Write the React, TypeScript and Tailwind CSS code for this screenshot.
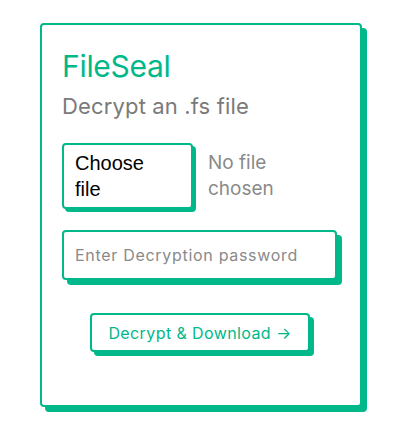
import React from "react";

export default function App() {
  return (
    <div className="min-h-[441px] w-[411px] bg-white pt-[23px] pl-[40px]" style={{ fontFamily: "Inter, 'Noto Sans', sans-serif" }}>
      <div className="w-[322px] h-[384px] rounded-[4px] border-2 border-[#00b88a] bg-white shadow-[5px_5px_0_#00b88a] px-[20px] pt-[23px]">
        <h1 className="text-[30px] leading-[36px] text-[#00b88a] font-normal tracking-[-0.3px]">FileSeal</h1>
        <p className="mt-[8px] text-[22px] leading-[28px] tracking-[0.15px] text-[#7a7a7a]">Decrypt an .fs file</p>
        <div className="mt-[23px] flex items-start">
          <div
            className="w-[131px] h-[66px] rounded-[4px] border-2 border-[#00b88a] shadow-[3px_3px_0_#00b88a] bg-white px-[11px] py-[5px] text-[20px] leading-[26px] text-black"
            style={{ fontFamily: "'Liberation Sans', Arial, sans-serif" }}
          >
            Choose
            <br />
            file
          </div>
          <div className="ml-[15px] pt-[7px] w-[90px] text-[19px] leading-[26px] text-[#8a8a8a]">No file chosen</div>
        </div>
        <input
          type="password"
          placeholder="Enter Decryption password"
          className="mt-[21px] block w-[275px] h-[50px] rounded-[4px] border-2 border-[#00b88a] shadow-[5px_5px_0_#00b88a] bg-white px-[11px] text-[16px] tracking-[0.7px] text-black placeholder:text-[#8a8a8a] outline-none"
        />
        <div className="mt-[33px] flex justify-center pr-[2px]">
          <button className="w-[220px] h-[39px] rounded-[4px] border-2 border-[#00b88a] shadow-[4px_4px_0_#00b88a] bg-white text-[16px] tracking-[0.4px] text-[#00b88a]">
            Decrypt &amp; Download →
          </button>
        </div>
      </div>
    </div>
  );
}
